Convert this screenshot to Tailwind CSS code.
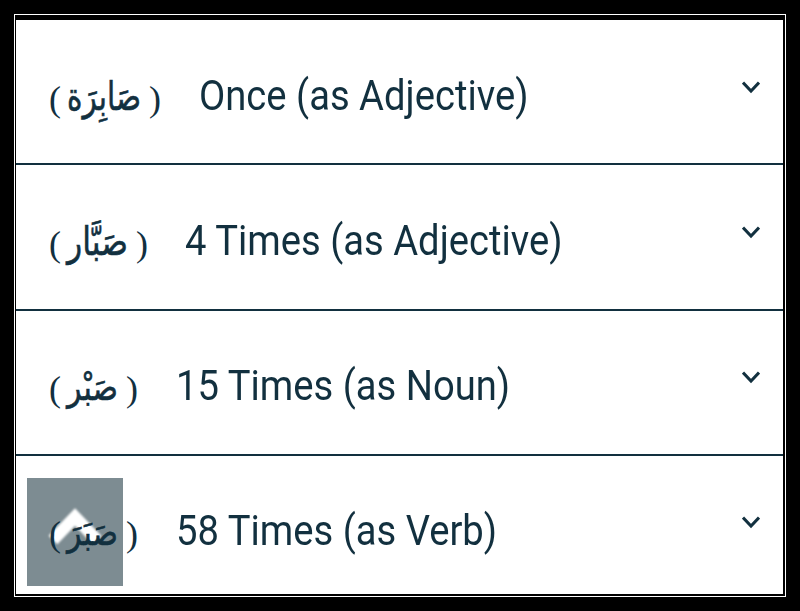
<!DOCTYPE html>
<html lang="en">
  <head>
    <meta charset="UTF-8" />
    <meta name="viewport" content="width=device-width, initial-scale=1.0" />
    <title>Word Occurrences</title>
    <script src="https://cdn.jsdelivr.net/npm/@tailwindcss/browser@4"></script>
  </head>
  <body class="h-[611px] w-[800px] overflow-hidden bg-black pt-3.5 pl-3.5">
    <div class="h-[583px] w-[772px] border border-white bg-black pt-[5px] pl-px">
      <div class="relative flex h-[574px] w-[767px] flex-col overflow-hidden bg-white text-[#12303f]">
        <!-- Adjective (feminine) -->
        <div class="relative flex h-[145px] shrink-0 border-b-2 border-[#12303f] pt-[50px] pl-[33px]">
          <div class="flex w-[150px] pt-1 font-['Liberation_Serif',serif] text-[36px] leading-[50px]">
            <span class="w-[18px]">(</span>
            <span lang="ar" dir="rtl" class="w-[74px]"><svg class="h-[50px] w-[74px] overflow-visible" fill="currentColor" stroke="currentColor" stroke-width=".6"><text x="74" y="36" textLength="74" lengthAdjust="spacingAndGlyphs" class="font-['DejaVu_Sans',sans-serif] text-[39px]">صَابِرَة</text></svg></span>
            <span class="pl-2">)</span>
          </div>
          <p class="w-[500px] origin-left scale-x-[.888] font-[Roboto,sans-serif] text-[43px] leading-[50px] whitespace-nowrap">Once (as Adjective)</p>
          <svg class="absolute right-[23px] top-[59px] h-4 w-[18px]" viewBox="0 0 18 16" fill="none" stroke="currentColor" stroke-width="3"><path d="M1 3.500 9 12 17 3.500" /></svg>
        </div>
        <!-- Adjective (intensive) -->
        <div class="relative flex h-[146px] shrink-0 border-b-2 border-[#12303f] pt-[50px] pl-[33px]">
          <div class="flex w-[136px] pt-1 font-['Liberation_Serif',serif] text-[36px] leading-[50px]">
            <span class="w-[18px]">(</span>
            <span lang="ar" dir="rtl" class="w-[61px]"><svg class="h-[50px] w-[61px] overflow-visible" fill="currentColor" stroke="currentColor" stroke-width=".6"><text x="61" y="36" textLength="61" lengthAdjust="spacingAndGlyphs" class="font-['DejaVu_Sans',sans-serif] text-[39px]">صَبَّار</text></svg></span>
            <span class="pl-2">)</span>
          </div>
          <p class="w-[500px] origin-left scale-x-[.888] font-[Roboto,sans-serif] text-[43px] leading-[50px] whitespace-nowrap">4 Times (as Adjective)</p>
          <svg class="absolute right-[23px] top-[59px] h-4 w-[18px]" viewBox="0 0 18 16" fill="none" stroke="currentColor" stroke-width="3"><path d="M1 3.500 9 12 17 3.500" /></svg>
        </div>
        <!-- Noun -->
        <div class="relative flex h-[145px] shrink-0 border-b-2 border-[#12303f] pt-[49px] pl-[33px]">
          <div class="flex w-[127px] pt-1 font-['Liberation_Serif',serif] text-[36px] leading-[50px]">
            <span class="w-[18px]">(</span>
            <span lang="ar" dir="rtl" class="w-[51px]"><svg class="h-[50px] w-[51px] overflow-visible" fill="currentColor" stroke="currentColor" stroke-width=".6"><text x="51" y="36" textLength="51" lengthAdjust="spacingAndGlyphs" class="font-['DejaVu_Sans',sans-serif] text-[37px]">صَبْر</text></svg></span>
            <span class="pl-2">)</span>
          </div>
          <p class="w-[500px] origin-left scale-x-[.888] font-[Roboto,sans-serif] text-[43px] leading-[50px] whitespace-nowrap">15 Times (as Noun)</p>
          <svg class="absolute right-[23px] top-[58px] h-4 w-[18px]" viewBox="0 0 18 16" fill="none" stroke="currentColor" stroke-width="3"><path d="M1 3.500 9 12 17 3.500" /></svg>
        </div>
        <!-- Verb -->
        <div class="relative flex h-[138px] shrink-0 pt-[49px] pl-[33px]">
          <!-- Back to top button, floats over the label -->
          <div class="absolute top-[22px] left-[11px] h-[108px] w-24 bg-[#7d8c92]">
            <svg class="h-[108px] w-24 blur-[1px]" viewBox="0 0 96 108" fill="none" stroke="white" stroke-width="12"><path d="M26 62 48 39 70 62" /></svg>
          </div>
          <div class="relative flex w-[127px] pt-1 font-['Liberation_Serif',serif] text-[36px] leading-[50px]">
            <span class="w-[18px]">(</span>
            <span lang="ar" dir="rtl" class="w-[51px]"><svg class="h-[50px] w-[51px] overflow-visible" fill="currentColor" stroke="currentColor" stroke-width=".6"><text x="51" y="36" textLength="51" lengthAdjust="spacingAndGlyphs" class="font-['DejaVu_Sans',sans-serif] text-[37px]">صَبَرَ</text></svg></span>
            <span class="pl-2">)</span>
          </div>
          <p class="w-[500px] origin-left scale-x-[.888] font-[Roboto,sans-serif] text-[43px] leading-[50px] whitespace-nowrap">58 Times (as Verb)</p>
          <svg class="absolute right-[23px] top-[58px] h-4 w-[18px]" viewBox="0 0 18 16" fill="none" stroke="currentColor" stroke-width="3"><path d="M1 3.500 9 12 17 3.500" /></svg>
        </div>
      </div>
    </div>
  </body>
</html>
